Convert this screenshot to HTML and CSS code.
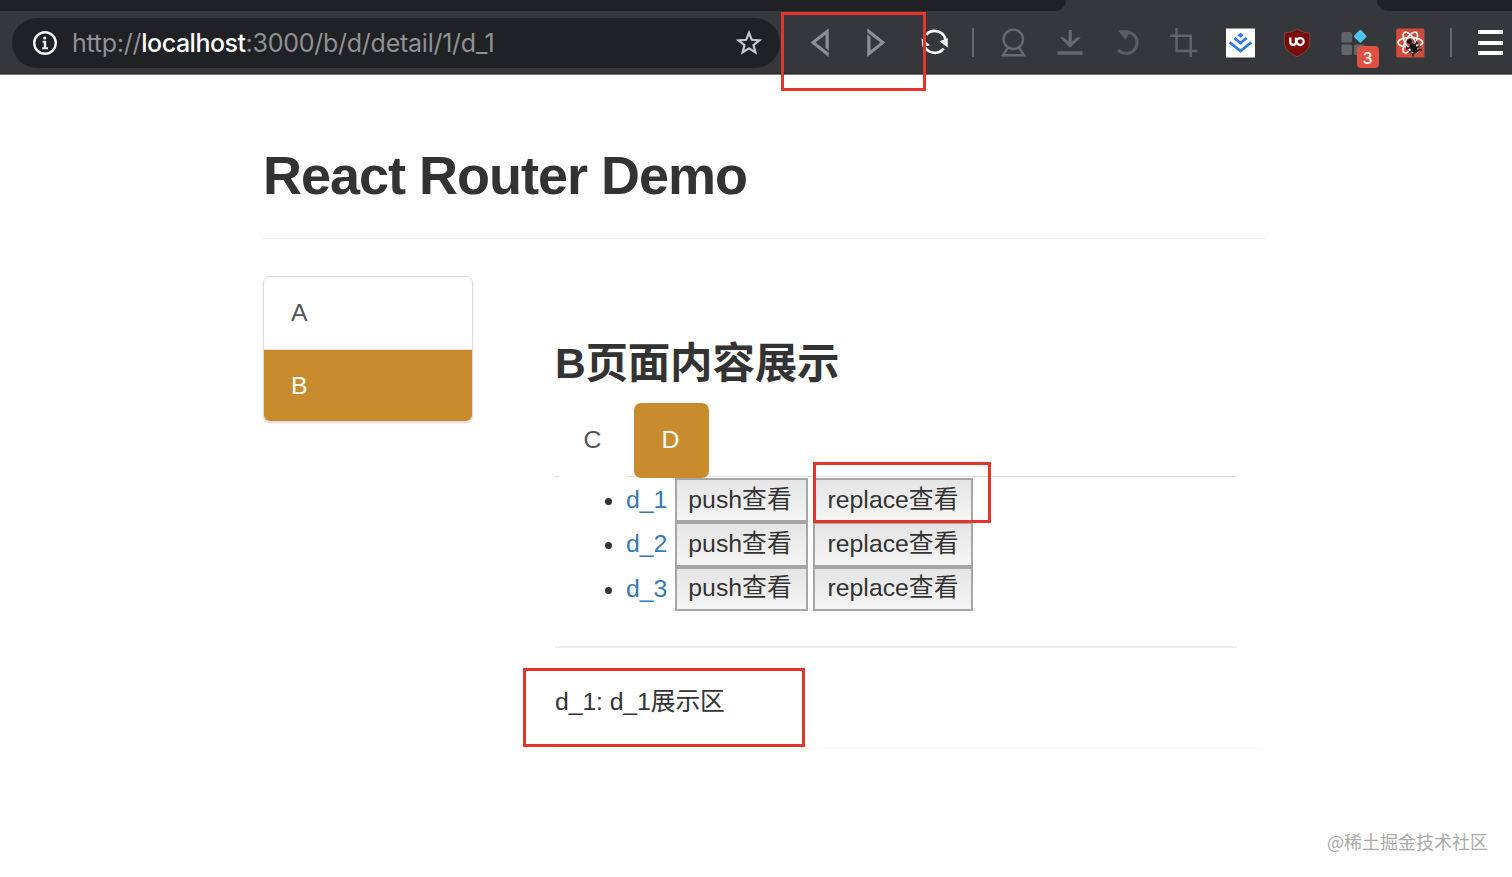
FILE: index.html
```html
<!DOCTYPE html>
<html lang="zh-CN">
<head>
    <meta charset="utf-8">
    <title>React Router Demo</title>
    <link rel="stylesheet" href="styles.css">
</head>
<body>
    <div class="browser">
        <div class="tabs">
            <div class="tabs-left"></div>
            <div class="tabs-right"></div>
        </div>
        <div class="toolbar">
            <div class="address">
                <svg class="info" width="26" height="26" viewBox="0 0 26 26">
                    <circle cx="13" cy="13" r="10.8" fill="none" stroke="#f1f3f4" stroke-width="2.4"/>
                    <path d="M10.5 10.8h3.700v6.400h1.800v2h-5.800v-2h1.600v-4.400h-1.300z" fill="#f1f3f4"/>
                    <circle cx="12.8" cy="8" r="1.6" fill="#f1f3f4"/>
                </svg>
                <div class="url">http://<span>localhost</span>:3000/b/d/detail/1/d_1</div>
                <svg class="star" width="28" height="28" viewBox="0 0 28 28" fill="none" stroke="#c5c7ca" stroke-width="2.2">
                    <path d="M14 3.8l2.8 7 7.6.5-5.9 4.8 1.9 7.3-6.4-4-6.4 4 1.9-7.3-5.9-4.8 7.6-.5z"/>
                </svg>
            </div>
            <div class="icons nav">
                <svg width="32" height="32" viewBox="0 0 32 32" fill="#8e8f91">
                    <path d="M24.7 1.2V24l-3.2-3.2V7.8l-10 7.800 13.200 10.200V30L6.500 15.600z"/>
                </svg>
                <svg width="32" height="32" viewBox="0 0 32 32" fill="#8e8f91">
                    <path d="M6.300 1.200l18 14.400L6.300 30V7l3.200 3.200v13.400l10-8L6.300 5.400z"/>
                </svg>
                <svg width="32" height="32" viewBox="0 0 32 32">
                    <g fill="none" stroke="#fff" stroke-width="2.7">
                        <path d="M8.300 7.600A11.300 11.300 0 0 1 27.800 14"/>
                        <path d="M25.600 21.700A11.300 11.300 0 0 1 6 17.500"/>
                    </g>
                    <path d="M21.500 14.200l8.300-3v9.300zM3.500 11.300l8.500 7-7.500 1.700z" fill="#fff"/>
                </svg>
            </div>
            <div class="line"></div>
            <div class="icons">
                <svg width="32" height="32" viewBox="0 0 32 32" fill="none" stroke="#68696b" stroke-width="2.4">
                    <circle cx="16.3" cy="12.3" r="9.7"/>
                    <path d="M11 20.6L6 28.3h21l-5-7.700"/>
                </svg>
                <svg width="32" height="32" viewBox="0 0 32 32">
                    <path d="M14.6 3h3.2v11.5l5.500-4.200h3.500L16.200 20.800 6 10.300h3.500l5.100 4.200zM3.500 24.200h25v3.600h-25z" fill="#68696b"/>
                </svg>
                <svg width="32" height="32" viewBox="0 0 32 32">
                    <path d="M15 5.200c7 0 11 4.300 11 10.100S21.700 26.400 15.500 26.400c-3.200 0-6-.9-8.500-3.200" fill="none" stroke="#5c5d60" stroke-width="3"/>
                    <path d="M7 3.200h11v3.200l-3.500 6.600z" fill="#5c5d60"/>
                </svg>
                <svg width="32" height="32" viewBox="0 0 32 32" fill="none" stroke="#626366" stroke-width="2.5">
                    <path d="M3 8.700h20.700V30M9.500 1v23h21"/>
                </svg>
                <svg width="32" height="32" viewBox="0 0 32 32">
                    <path d="M2 1.500h29v29H2z" fill="#fff"/>
                    <path d="M16.500 5.800l3.200 2.500-3.200 2.500-3.200-2.500z" fill="#2f78ed"/>
                    <path d="M10.300 11l6.200 5 6.200-5M5.700 15.300l10.800 8.700 10.800-8.700" fill="none" stroke="#2f78ed" stroke-width="2.800"/>
                </svg>
                <svg width="32" height="32" viewBox="0 0 32 32" fill="none">
                    <path d="M16 1.800c4 2.800 7.500 3.900 12.800 4.200v9c0 7-5.300 11.400-12.800 14.700C8.500 26.400 3.200 22 3.200 15V6C8.500 5.700 12 4.600 16 1.800z" fill="#790d0b" stroke="#704b4b"/>
                    <path d="M9.300 10.500v4.600a2.800 2.800 0 0 0 5.700 0v-4.600" stroke="#fff" stroke-width="2.200"/>
                    <circle cx="19.200" cy="14.600" r="3.500" stroke="#fff" stroke-width="2.200"/>
                </svg>
                <div class="extension">
                    <svg width="32" height="32" viewBox="0 0 32 32" fill="#5f6568">
                        <rect x="3.5" y="5" width="10.5" height="10.5" rx="1.5"/>
                        <rect x="3.5" y="17.5" width="10.5" height="10.5" rx="1.5"/>
                        <rect x="16" y="17.5" width="10.5" height="10.5" rx="1.5"/>
                        <rect x="17.500" y="4.500" width="9.600" height="9.600" rx="1.200" transform="rotate(45 22.300 9.300)" fill="#4fc3f7"/>
                    </svg>
                    <span class="badge">3</span>
                </div>
                <svg width="32" height="32" viewBox="0 0 32 32">
                    <rect x="2.200" y="1.500" width="28.300" height="29" rx="1.500" fill="#cf4b3c"/>
                    <g fill="none" stroke="#fff" stroke-width="1.500">
                        <ellipse cx="16.300" cy="15.500" rx="12.300" ry="4.900"/>
                        <ellipse cx="16.300" cy="15.500" rx="11.800" ry="4.900" transform="rotate(60 16.300 15.500)"/>
                        <ellipse cx="16.300" cy="15.500" rx="11.800" ry="4.900" transform="rotate(120 16.300 15.500)"/>
                    </g>
                    <g transform="rotate(-32 19 20)">
                        <ellipse cx="19" cy="21.500" rx="3.300" ry="5.500" fill="#171a1c"/>
                        <circle cx="19" cy="13.500" r="2.600" fill="#171a1c"/>
                        <path d="M13.500 16v2.500l11 .5v-2M12.500 22.500h13M14 28l1-2 8-.5 2 2" fill="none" stroke="#171a1c" stroke-width="1.600"/>
                    </g>
                </svg>
            </div>
            <div class="line last"></div>
            <div class="menu"><i></i><i></i><i></i></div>
        </div>
    </div>

    <div class="page">
        <h1>React Router Demo</h1>
        <div class="row">
            <div class="list-group">
                <a class="item">A</a>
                <a class="item active">B</a>
            </div>
            <div class="content">
                <h2>B页面内容展示</h2>
                <div class="nav-tabs">
                    <a class="tab">C</a>
                    <a class="tab active">D</a>
                </div>
                <ul>
                    <li><a>d_1</a><button>push查看</button><button class="replace">replace查看</button></li>
                    <li><a>d_2</a><button>push查看</button><button class="replace">replace查看</button></li>
                    <li><a>d_3</a><button>push查看</button><button class="replace">replace查看</button></li>
                </ul>
                <div class="detail">d_1: d_1展示区</div>
            </div>
        </div>
    </div>
    <div class="watermark">@稀土掘金技术社区</div>

    <div class="mark mark-nav"></div>
    <div class="mark mark-replace"></div>
    <div class="mark mark-detail"></div>
</body>
</html>
```
FILE: styles.css
```css
* {
    box-sizing: border-box;
}
body {
    margin: 0;
    height: 877px;
    position: relative;
    overflow: hidden;
    background: #fff;
    color: #333;
    font: 24.8px/35px "Liberation Sans", "Noto Sans CJK SC", sans-serif;
}
svg {
    display: block;
    flex: none;
}
.browser {
    height: 75px;
    background: #36373b;
    border-bottom: 1px solid #77787a;
    box-shadow: inset 0 -1px #27282b;
}
.tabs {
    display: flex;
    justify-content: space-between;
    height: 11px;
}
.tabs-left {
    width: 1066px;
    background: #202125;
    border-bottom-right-radius: 11px;
}
.tabs-right {
    width: 135px;
    background: #202125;
    border-bottom-left-radius: 13px;
}
.toolbar {
    display: flex;
    align-items: center;
    height: 63px;
    padding-left: 12px;
}
.address {
    display: flex;
    align-items: center;
    width: 768px;
    height: 50px;
    padding: 0 17px 0 20px;
    border-radius: 25px;
    background: #202125;
}
.url {
    flex: 1;
    margin-left: 14px;
    color: #909194;
    font: 25px/50px Inter, sans-serif;
    letter-spacing: -0.25px;
    white-space: nowrap;
}
.url span {
    color: #fff;
    font-weight: 500;
    letter-spacing: -0.5px;
}
.icons {
    display: grid;
    grid-template-columns: repeat(8, 56.7px);
    justify-items: center;
    margin-left: 11px;
}
.nav {
    grid-template-columns: repeat(3, 56.7px);
    margin-left: 12px;
}
.line {
    width: 2px;
    height: 29px;
    margin-left: 10px;
    background: #68696b;
}
.last {
    margin-left: 11px;
}
.menu {
    display: flex;
    flex-direction: column;
    gap: 6.5px;
    width: 25px;
    margin-left: 26px;
}
.menu i {
    height: 4px;
    background: #fff;
}
.extension {
    position: relative;
}
.badge {
    position: absolute;
    left: 19px;
    top: 19px;
    width: 22px;
    height: 22px;
    border-radius: 4px;
    background: #e05141;
    color: #fff;
    font: 500 16px/24px Inter, sans-serif;
    text-align: center;
}
.page {
    width: 1002px;
    margin-left: 263px;
}
h1 {
    height: 164px;
    margin: 0 0 37px;
    padding-top: 70px;
    border-bottom: 1px solid #e8e8e8;
    font-size: 54px;
    line-height: 60px;
    letter-spacing: -1px;
}
.row {
    display: flex;
    align-items: flex-start;
}
.list-group {
    width: 210px;
    border: 1px solid #ddd;
    border-radius: 7px;
    box-shadow: 0 1px 2px rgba(0, 0, 0, 0.15);
    overflow: hidden;
}
.item {
    display: block;
    height: 72px;
    padding-left: 27px;
    line-height: 72px;
    color: #555;
}
.item.active {
    border-top: 1px solid #ddd;
    background: #c88c2f;
    color: #fff;
}
.content {
    flex: 1;
    height: 473px;
    margin: 0 3px 0 82px;
    padding-right: 25px;
    border-bottom: 1px solid #f6f6f6;
}
h2 {
    margin: 64px 0 15px;
    font-size: 42.5px;
    line-height: 48px;
    letter-spacing: -0.2px;
}
.nav-tabs {
    display: flex;
    gap: 8px;
    height: 74px;
    border-bottom: 1px solid #ddd;
}
/* the idle tab covers the line below it */
.tab {
    width: 67px;
    height: 75px;
    margin-left: 4px;
    background: #fff;
    line-height: 74px;
    text-align: center;
    color: #555;
}
.tab.active {
    width: 75px;
    margin-left: 0;
    padding-right: 2px;
    border-radius: 7px;
    background: #c88c2f;
    color: #fff;
}
ul {
    margin: 0;
    padding: 1px 0 35px 71px;
    border-bottom: 2px solid #eee;
}
li {
    height: 44.3px;
    line-height: 43px;
}
li a {
    display: inline-block;
    width: 48.5px;
    color: #337ab7;
}
button {
    width: 133px;
    height: 44.3px;
    margin: 0 5.5px 0 0;
    padding: 0 2px 1px 0;
    border: 2px solid #a6a6a6;
    border-radius: 0;
    background: linear-gradient(#e5e5e5, #f5f5f5);
    color: #333;
    font: inherit;
    line-height: 38px;
    vertical-align: top;
}
.replace {
    width: 160px;
    margin: 0;
    padding-right: 0;
}
.detail {
    padding-top: 36px;
    letter-spacing: -0.1px;
}
.watermark {
    position: absolute;
    right: 24px;
    bottom: 19px;
    color: #aaa;
    font: 18px/34px "Noto Sans CJK SC", sans-serif;
}
/* red callout boxes drawn over the page */
.mark {
    position: absolute;
    border: 3px solid #e33529;
}
.mark-nav {
    left: 781px;
    top: 12px;
    width: 145px;
    height: 79px;
}
.mark-replace {
    left: 813px;
    top: 462px;
    width: 178px;
    height: 61px;
}
.mark-detail {
    left: 523px;
    top: 668px;
    width: 282px;
    height: 79px;
}
```
